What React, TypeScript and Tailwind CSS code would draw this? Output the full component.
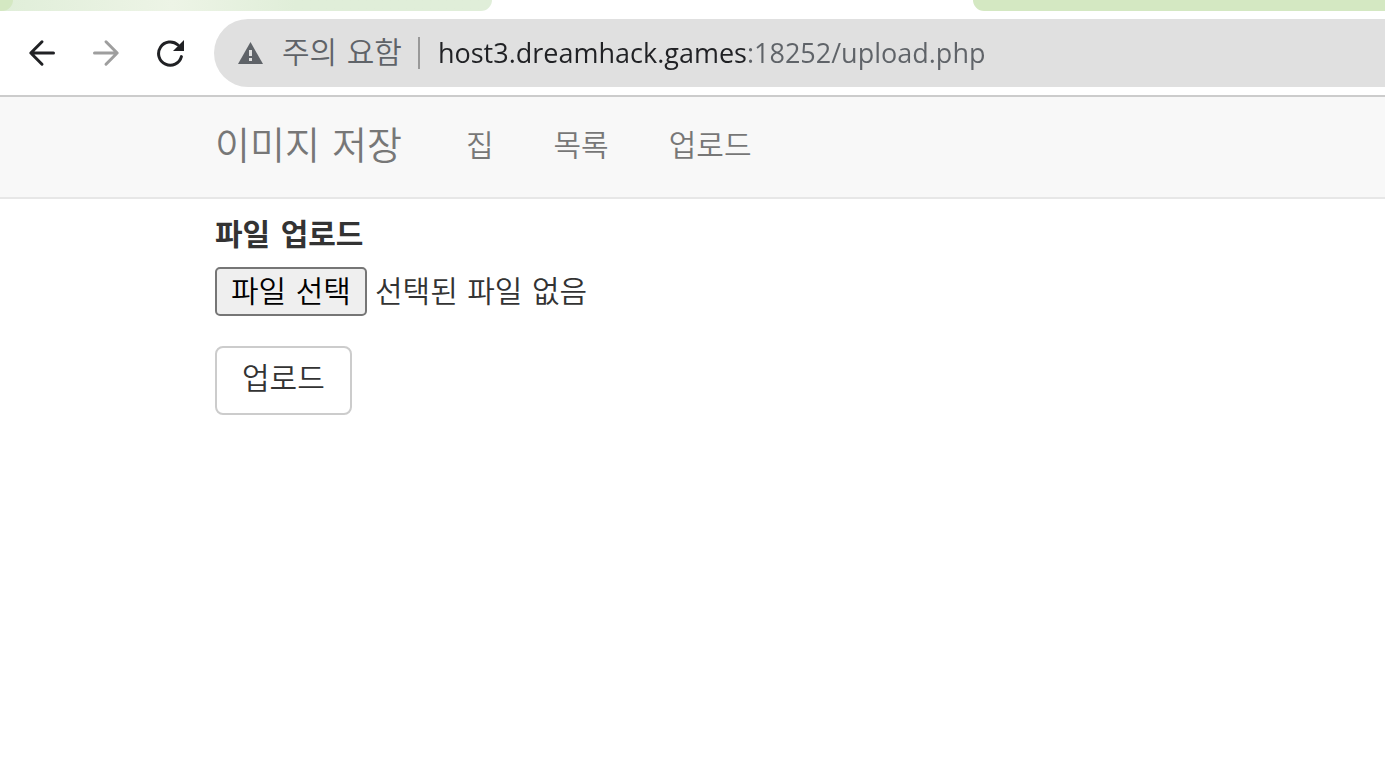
import { useRef, useState } from 'react'

const NAV = [
  { href: '#home', label: '집' },
  { href: '#list', label: '목록' },
  { href: '#upload', label: '업로드' },
]

const BackIcon = () => (
  <svg width="28" height="28" viewBox="0 0 28 28" fill="none" stroke="currentColor" strokeWidth="3" strokeLinecap="round" strokeLinejoin="round">
    <path d="M25.5 14H3M14 2.8L2.8 14L14 25.2"/>
  </svg>
)

const ForwardIcon = () => (
  <svg width="28" height="28" viewBox="0 0 28 28" fill="none" stroke="currentColor" strokeWidth="3" strokeLinecap="round" strokeLinejoin="round">
    <path d="M2.5 14H25M14 2.8L25.2 14L14 25.2"/>
  </svg>
)

const ReloadIcon = () => (
  <svg width="28" height="28" viewBox="0 0 28 28" fill="none">
    <path d="M25.4 17.6A11.6 11.6 0 1 1 22 6" stroke="currentColor" strokeWidth="3" strokeLinecap="round"/>
    <path d="M28 1V12H17Z" fill="currentColor"/>
  </svg>
)

const WarningIcon = () => (
  <svg width="26" height="22" viewBox="0 0 26 22" className="shrink-0">
    <path d="M12.5 0L25 22H0Z" fill="#5f6368"/>
    <path d="M11 8H14V14H11ZM11 16H14V19H11Z" fill="#e0e0e0"/>
  </svg>
)

function Browser() {
  const [url, setUrl] = useState('host3.dreamhack.games:18252/upload.php')

  return (
    <header className="border-b-2 border-[#cccccc] bg-white">
      <div className="flex h-[11px] justify-between">
        <div className="flex w-[492px] rounded-br-[18px] bg-linear-to-r from-[#e0eed9] via-[#edf4e6] via-35% to-[#e0eed9] to-60%">
          <div className="w-[13px] rounded-br-full bg-[#d4e8c2]"/>
        </div>
        <div className="w-[412px] rounded-bl-[18px] bg-[#d4e8c2]"/>
      </div>
      <div className="flex items-center py-2 pl-[10px] text-[#202124]">
        <button aria-label="뒤로" className="flex h-16 w-16 items-center justify-center"><BackIcon/></button>
        <button aria-label="앞으로" className="flex h-16 w-16 items-center justify-center text-[#9e9e9e]"><ForwardIcon/></button>
        <button aria-label="새로고침" className="flex h-16 w-16 items-center justify-center"><ReloadIcon/></button>
        <div className="ml-3 flex h-[68px] min-w-0 flex-1 items-center rounded-l-full bg-[#e0e0e0] pl-6">
          <WarningIcon/>
          <span className="ml-[18px] shrink-0 text-[30px] leading-10 font-[350] text-[#5f6368]">주의 요함</span>
          <span className="mr-[18px] ml-4 h-8 w-[2px] shrink-0 bg-[#999999]"/>
          <input
            aria-label="주소"
            value={url}
            onChange={e => setUrl(e.target.value)}
            className="h-10 min-w-0 flex-1 bg-linear-to-r from-[#202124] from-[308px] to-[#5f6368] to-[308px] bg-clip-text font-['Open_Sans',sans-serif] text-[27px] text-transparent caret-[#202124] outline-none"
          />
        </div>
      </div>
    </header>
  )
}

function UploadForm() {
  const fileRef = useRef<HTMLInputElement>(null)
  const [fileName, setFileName] = useState('')

  return (
    <form onSubmit={e => e.preventDefault()} className="flex flex-col items-start pt-4 pl-[215px] text-[30px] leading-10 text-[#333333]">
      <label htmlFor="file" className="font-bold">파일 업로드</label>
      <div className="mt-3 flex items-center">
        <input ref={fileRef} id="file" type="file" className="sr-only" onChange={e => setFileName(e.target.files?.[0]?.name || '')}/>
        <button type="button" onClick={() => fileRef.current?.click()} className="h-[49px] rounded-[5px] border-2 border-[#767676] bg-[#efefef] px-[14px] font-[350] text-black">파일 선택</button>
        <span className="ml-2 font-[350]">{fileName || '선택된 파일 없음'}</span>
      </div>
      <button type="submit" className="mt-[30px] h-[69px] rounded-lg border-2 border-[#cccccc] bg-white px-[25px] pb-1 font-[350]">업로드</button>
    </form>
  )
}

export default function App() {
  return (
    <div className="min-h-screen bg-white pr-px font-['DejaVu_Sans','Noto_Sans_CJK_KR',sans-serif]">
      <Browser/>
      <nav className="flex h-[102px] items-center border-b-2 border-[#e7e7e7] bg-[#f8f8f8] pb-[2px] pl-[215px] font-[350] text-[#777777]">
        <a href="#home" className="mr-[34px] text-[38px] leading-12">이미지 저장</a>
        {NAV.map(item => (
          <a key={item.href} href={item.href} className="px-[30px] text-[30px] leading-10">{item.label}</a>
        ))}
      </nav>
      <main><UploadForm/></main>
    </div>
  )
}
